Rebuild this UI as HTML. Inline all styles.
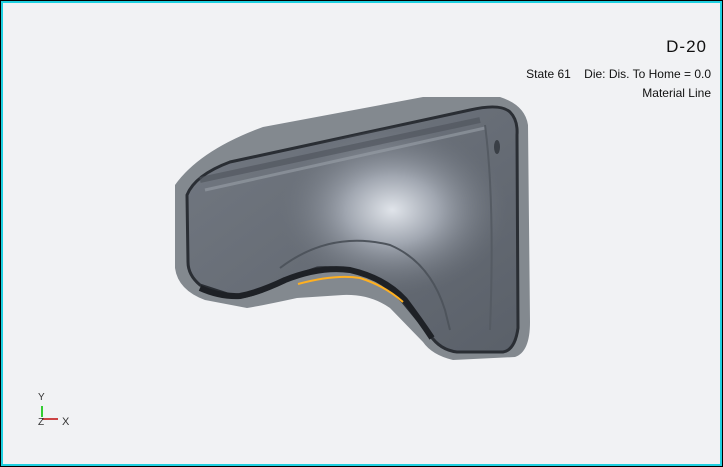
<!DOCTYPE html>
<html><head><style>
html,body{margin:0;padding:0;}
body{width:723px;height:467px;position:relative;overflow:hidden;background:#000;font-family:"Liberation Sans",sans-serif;}
#f{position:absolute;left:1px;top:1px;width:717px;height:461px;border:2px solid #1fd0e0;background:#f1f2f4;}
.t{position:absolute;right:0;color:#111;text-align:right;white-space:nowrap;}
</style></head><body>
<div id="f"></div>
<svg style="position:absolute;left:0;top:0" width="723" height="467">
<defs>
<linearGradient id="g1" x1="0" y1="0" x2="1" y2="1">
<stop offset="0" stop-color="#737982"/><stop offset="0.5" stop-color="#676d76"/><stop offset="1" stop-color="#5a6069"/>
</linearGradient>
<radialGradient id="hl" cx="0.62" cy="0.42" r="0.35">
<stop offset="0" stop-color="#e0e4ea"/><stop offset="0.4" stop-color="#a0a6b0"/><stop offset="1" stop-color="#6a7079" stop-opacity="0"/>
</radialGradient>
</defs>
<path d="M175,185 Q200,150 263,127 L423,97 L500,97 Q525,105 528,125 L530,322 Q530,352 515,357 L453,360 Q432,355 423,342 L390,308 Q370,294 343,295 L297,298 Q265,305 247,308 L205,300 Q178,290 175,268 Z" fill="#83898f"/>
<path d="M187,195 Q195,175 230,162 L470,110 Q500,103 510,112 Q518,120 517,135 L518,328 Q515,350 503,352 L457,352 Q440,350 430,335 L403,302 Q380,278 357,273 Q335,266 317,268 Q295,275 270,288 Q250,297 237,297 L200,285 Q188,275 188,262 Z" fill="url(#g1)" stroke="#2a2e34" stroke-width="3"/>
<path d="M187,195 Q195,175 230,162 L470,110 Q500,103 510,112 Q518,120 517,135 L518,328 Q515,350 503,352 L457,352 Q440,350 430,335 L403,302 Q380,278 357,273 Q335,266 317,268 Q295,275 270,288 Q250,297 237,297 L200,285 Q188,275 188,262 Z" fill="url(#hl)"/>
<path d="M200,180 L480,120" stroke="#4c525a" stroke-width="6" fill="none" opacity="0.6"/>
<path d="M205,190 L485,128" stroke="#9aa0a8" stroke-width="3" fill="none" opacity="0.6"/>
<path d="M200,288 Q220,297 240,296 Q260,292 285,280 Q320,266 350,270 Q385,278 405,300 Q420,320 432,338" stroke="#1e2126" stroke-width="6" fill="none"/>
<path d="M280,268 Q330,230 390,245 Q430,262 445,310 L450,330" stroke="#4e545c" stroke-width="2" fill="none"/>
<path d="M485,125 Q495,200 490,330" stroke="#555b63" stroke-width="2" fill="none"/>
<ellipse cx="497" cy="147" rx="3" ry="7" fill="#3a3f46"/>
<path d="M298,284 Q335,274 360,278 Q385,286 403,302" stroke="#ffb020" stroke-width="2" fill="none"/>
<line x1="42" y1="406" x2="42" y2="417" stroke="#3c3" stroke-width="2"/>
<line x1="42" y1="419" x2="58" y2="419" stroke="#c44" stroke-width="2"/>
<text x="38" y="400" font-size="10" fill="#333">Y</text>
<text x="38" y="425" font-size="10" fill="#333">Z</text>
<text x="62" y="425" font-size="11" fill="#333">X</text>
</svg>
<div class="t" style="top:37px;right:16px;font-size:17px;letter-spacing:1px;">D-20</div>
<div class="t" style="top:67px;right:12px;font-size:12px;">State 61&nbsp;&nbsp;&nbsp;&nbsp;Die: Dis. To Home = 0.0</div>
<div class="t" style="top:86px;right:12px;font-size:12px;">Material Line</div>
</body></html>
